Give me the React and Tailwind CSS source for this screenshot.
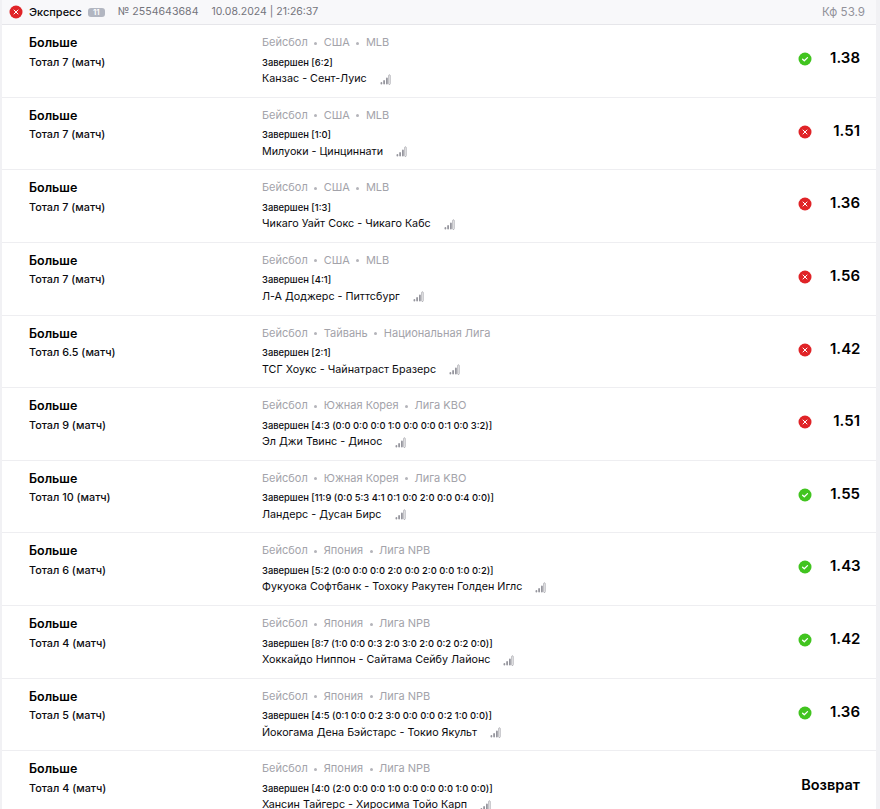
import React from 'react';

const rows = [
  { total: 'Тотал 7 (матч)', country: 'США', league: 'MLB', status: 'Завершен [6:2]', match: 'Канзас - Сент-Луис', result: 'win', odds: '1.38' },
  { total: 'Тотал 7 (матч)', country: 'США', league: 'MLB', status: 'Завершен [1:0]', match: 'Милуоки - Цинциннати', result: 'lose', odds: '1.51' },
  { total: 'Тотал 7 (матч)', country: 'США', league: 'MLB', status: 'Завершен [1:3]', match: 'Чикаго Уайт Сокс - Чикаго Кабс', result: 'lose', odds: '1.36' },
  { total: 'Тотал 7 (матч)', country: 'США', league: 'MLB', status: 'Завершен [4:1]', match: 'Л-А Доджерс - Питтсбург', result: 'lose', odds: '1.56' },
  { total: 'Тотал 6.5 (матч)', country: 'Тайвань', league: 'Национальная Лига', status: 'Завершен [2:1]', match: 'ТСГ Хоукс - Чайнатраст Бразерс', result: 'lose', odds: '1.42' },
  { total: 'Тотал 9 (матч)', country: 'Южная Корея', league: 'Лига KBO', status: 'Завершен [4:3 (0:0 0:0 0:0 1:0 0:0 0:0 0:1 0:0 3:2)]', match: 'Эл Джи Твинс - Динос', result: 'lose', odds: '1.51' },
  { total: 'Тотал 10 (матч)', country: 'Южная Корея', league: 'Лига KBO', status: 'Завершен [11:9 (0:0 5:3 4:1 0:1 0:0 2:0 0:0 0:4 0:0)]', match: 'Ландерс - Дусан Бирс', result: 'win', odds: '1.55' },
  { total: 'Тотал 6 (матч)', country: 'Япония', league: 'Лига NPB', status: 'Завершен [5:2 (0:0 0:0 0:0 2:0 0:0 2:0 0:0 1:0 0:2)]', match: 'Фукуока Софтбанк - Тохоку Ракутен Голден Иглс', result: 'win', odds: '1.43' },
  { total: 'Тотал 4 (матч)', country: 'Япония', league: 'Лига NPB', status: 'Завершен [8:7 (1:0 0:0 0:3 2:0 3:0 2:0 0:2 0:2 0:0)]', match: 'Хоккайдо Ниппон - Сайтама Сейбу Лайонс', result: 'win', odds: '1.42' },
  { total: 'Тотал 5 (матч)', country: 'Япония', league: 'Лига NPB', status: 'Завершен [4:5 (0:1 0:0 0:2 3:0 0:0 0:0 0:2 1:0 0:0)]', match: 'Йокогама Дена Бэйстарс - Токио Якульт', result: 'win', odds: '1.36' },
  { total: 'Тотал 4 (матч)', country: 'Япония', league: 'Лига NPB', status: 'Завершен [4:0 (2:0 0:0 0:0 1:0 0:0 0:0 0:0 1:0 0:0)]', match: 'Хансин Тайгерс - Хиросима Тойо Карп', result: 'refund', odds: 'Возврат' },
];

const LoseIcon = () => (
  <svg width="14" height="14" viewBox="0 0 14 14" className="shrink-0">
    <circle cx="7" cy="7" r="6.5" fill="#e02327" />
    <path d="M5 5l4 4M9 5l-4 4" stroke="#fff" strokeWidth="1" strokeLinecap="round" />
  </svg>
);

const WinIcon = () => (
  <svg width="14" height="14" viewBox="0 0 14 14" className="shrink-0">
    <circle cx="7" cy="7" r="6.5" fill="#41c41f" />
    <path d="M4.6 7.2l1.7 1.6 3.2-3.2" stroke="#fff" strokeWidth="1.3" fill="none" strokeLinecap="round" strokeLinejoin="round" />
  </svg>
);

const StatsIcon = () => (
  <svg width="11" height="11" viewBox="0 0 11 11" className="ml-[13px] shrink-0">
    <rect x="0.5" y="8" width="1.8" height="2.5" rx="0.9" fill="#96969e" />
    <rect x="3.2" y="6" width="1.8" height="4.5" rx="0.9" fill="#96969e" />
    <rect x="6" y="3.5" width="1.8" height="7" rx="0.9" fill="#96969e" />
    <rect x="8.7" y="0.8" width="1.5" height="9.7" rx="0.75" fill="none" stroke="#96969e" strokeWidth="0.7" />
  </svg>
);

const Dot = () => <span className="mx-[6.5px] mt-[2px] h-[3px] w-[3px] rounded-full bg-[#b4b4ba]" />;

const Row = ({ row }) => (
  <div className="flex h-[72.65px] shrink-0 border-b border-[#eeeef1] pl-[27px] pr-[16px]">
    <div className="w-[233px] shrink-0 pt-[10px]">
      <div className="text-[12.5px] font-semibold leading-4 text-black">Больше</div>
      <div className="mt-[3.5px] text-[10.8px] font-medium leading-4 text-[#0b0b0f]">{row.total}</div>
    </div>
    <div className="min-w-0 flex-1 pt-[9px]">
      <div className="flex items-center text-[11px] leading-4 text-[#a3a3aa]">
        <span>Бейсбол</span>
        <Dot />
        <span>{row.country}</span>
        <Dot />
        <span>{row.league}</span>
      </div>
      <div className="mt-[5.5px] text-[9.4px] font-medium leading-[14px] text-[#0b0b0f]">{row.status}</div>
      <div className="mt-[1.5px] flex items-center text-[10.75px] leading-4 text-[#0b0b0f]">
        <span>{row.match}</span>
        <StatsIcon />
      </div>
    </div>
    <div className="flex items-start pt-[27px]">
      {row.result === 'win' && <WinIcon />}
      {row.result === 'lose' && <LoseIcon />}
      {row.result === 'refund' ? (
        <span className="-mt-[1px] text-[14.5px] font-semibold leading-[16px] text-black">{row.odds}</span>
      ) : (
        <span className="-mt-[2px] ml-[18px] w-[30px] text-right text-[15px] font-semibold leading-[16px] text-black">{row.odds}</span>
      )}
    </div>
  </div>
);

export default function App() {
  return (
    <div className="h-[809px] overflow-hidden bg-[#f1f1f4] pl-[2px] pr-[4px] font-['Inter',sans-serif]">
      <div className="flex flex-col rounded-tr-lg bg-white">
        <div className="flex h-[25px] shrink-0 items-center border-b border-[#e6e6ea] bg-[#f8f8fa] pl-[7px] pr-[11px] text-[11px] leading-4">
          <LoseIcon />
          <span className="ml-[6px] font-medium text-[#0b0b0f]">Экспресс</span>
          <span className="ml-[6px] flex h-[9px] w-[17px] items-center justify-center rounded-[3px] bg-[#b2b6c1] text-[8px] font-semibold text-white">11</span>
          <span className="ml-[13px] text-[10.6px] text-[#74747c]">№ 2554643684</span>
          <span className="ml-[13px] text-[10.5px] text-[#74747c]">10.08.2024 | 21:26:37</span>
          <span className="ml-auto text-[11.6px] text-[#92929a]">Кф 53.9</span>
        </div>
        {rows.map((row, i) => (
          <Row key={i} row={row} />
        ))}
      </div>
    </div>
  );
}
